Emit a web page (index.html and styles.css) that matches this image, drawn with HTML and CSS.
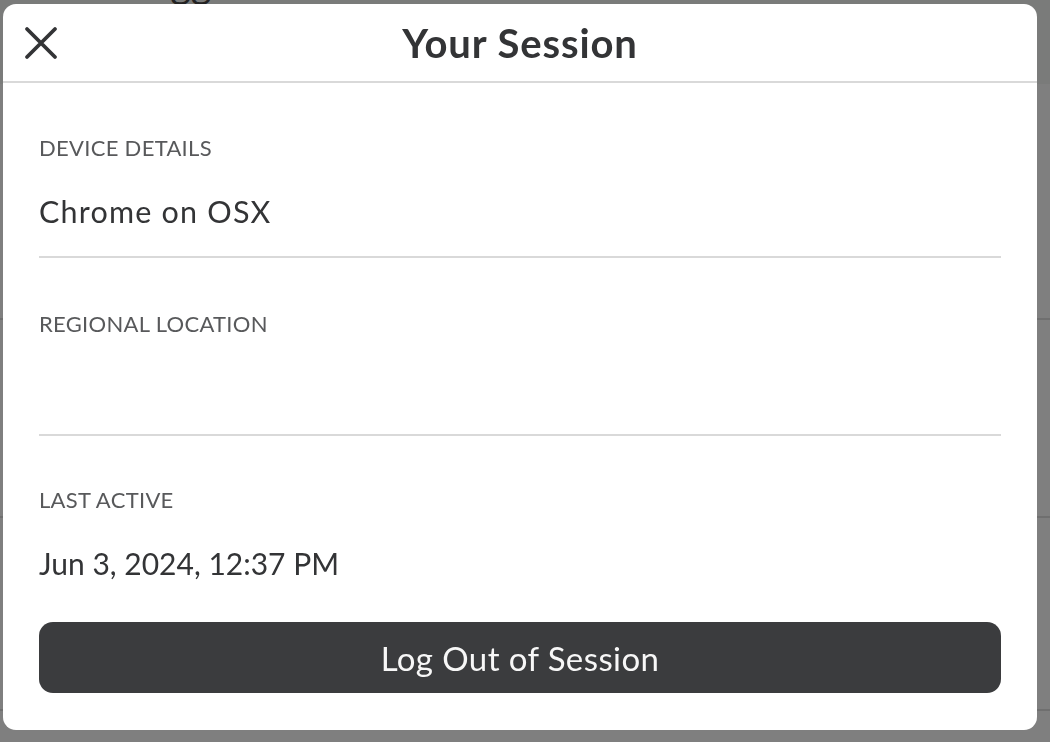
FILE: index.html
```html
<!DOCTYPE html>
<html lang="en">
<head>
<meta charset="utf-8">
<title>Your Session</title>
<link rel="stylesheet" href="styles.css">
</head>
<body>
<div class="page">
  <div class="page-top"><span class="page-title">Devices Logged</span></div>
  <div class="page-row r1"></div>
  <div class="page-row r2"></div>
  <div class="page-row r3"></div>
</div>
<div class="modal" role="dialog" aria-labelledby="modal-title">
  <header class="modal-header">
    <button class="close-btn" aria-label="Close">
      <svg width="34" height="34" viewBox="0 0 34 34"><path d="M3 3 L31 31 M31 3 L3 31" stroke="#333436" stroke-width="3.8" stroke-linecap="round" fill="none"/></svg>
    </button>
    <h1 class="modal-title" id="modal-title">Your Session</h1>
    <span class="spacer"></span>
  </header>
  <div class="modal-body">
    <section class="field first">
      <div class="field-label">DEVICE DETAILS</div>
      <div class="field-value">Chrome on OSX</div>
    </section>
    <section class="field middle">
      <div class="field-label">REGIONAL LOCATION</div>
      <div class="field-value"></div>
    </section>
    <section class="field last">
      <div class="field-label">LAST ACTIVE</div>
      <div class="field-value">Jun 3, 2024, 12:37 PM</div>
    </section>
    <button class="logout-btn">Log Out of Session</button>
  </div>
</div>
</body>
</html>
```

FILE: styles.css
```css
* { box-sizing: border-box; }
html, body { margin: 0; padding: 0; }
body {
  width: 1050px;
  height: 742px;
  overflow: hidden;
  background: #7f7f7f;
  font-family: "Lato", "Noto Sans", sans-serif;
}
.page { display: flex; flex-direction: column; }
.page-top {
  height: 84px;
  background: #7a7b7a;
  overflow: hidden;
}
.page-title {
  display: block;
  margin-top: -37px;
  margin-left: -20px;
  font-size: 40px;
  line-height: 40px;
  color: #222;
}
.page-row { border-bottom: 2px solid #6f6f6f; }
.r1 { height: 236px; }
.r2 { height: 198px; }
.r3 { height: 193px; }

.modal {
  position: fixed;
  left: 3px;
  top: 4px;
  width: 1034px;
  height: 726px;
  background: #fff;
  border-radius: 13px;
  display: flex;
  flex-direction: column;
}
.modal-header {
  height: 79px;
  border-bottom: 2px solid #d9d9d9;
  display: grid;
  grid-template-columns: 1fr auto 1fr;
  align-items: center;
  padding: 0 21px;
}
.close-btn {
  justify-self: start;
  background: none;
  border: 0;
  padding: 0;
  margin-top: 1px;
  width: 34px;
  height: 34px;
  display: flex;
}
.modal-title {
  margin: 0;
  font-size: 40px;
  font-weight: 700;
  color: #333436;
  letter-spacing: 0.9px;
}
.modal-body {
  padding: 0 36px;
  display: flex;
  flex-direction: column;
}
.field {
  padding-top: 52px;
  padding-bottom: 27px;
  border-bottom: 2px solid #d9d9d9;
  display: flex;
  flex-direction: column;
  gap: 32px;
}
.field.middle { padding-top: 53px; padding-bottom: 29px; }
.field.last { border-bottom: 0; padding-top: 51px; padding-bottom: 41px; }
.field-label {
  font-size: 22px;
  line-height: 26px;
  color: #58595b;
  letter-spacing: 0.3px;
}
.field-value {
  font-size: 30px;
  line-height: 36px;
  min-height: 36px;
  color: #333436;
}
.first .field-value { font-size: 30.5px; letter-spacing: 1.2px; }
.logout-btn {
  height: 71px;
  border: 0;
  border-radius: 14px;
  background: #3b3c3e;
  color: #f7f7f7;
  font-family: inherit;
  font-size: 33px;
  letter-spacing: 0.4px;
  padding: 0;
}
```
